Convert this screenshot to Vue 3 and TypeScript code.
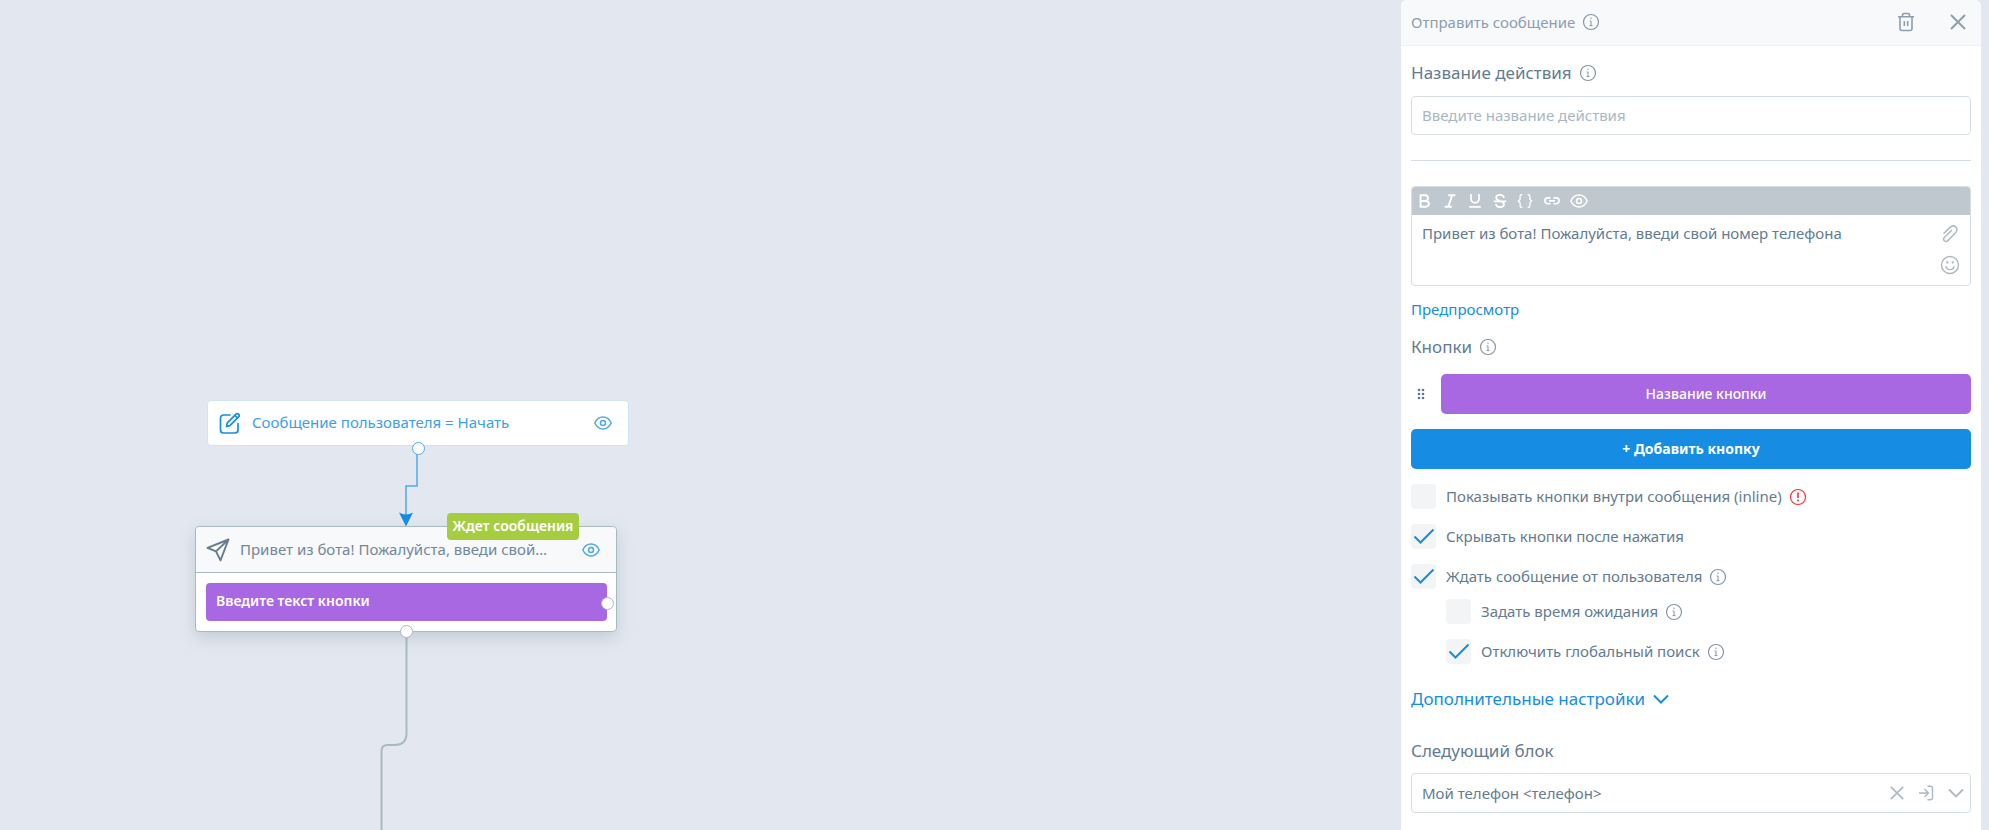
<script setup lang="ts">
import { defineComponent, h, ref } from 'vue'

const actionName = ref('')
const message = ref('Привет из бота! Пожалуйста, введи свой номер телефона')
const nextBlock = ref('phone')

interface Option {
  id: string
  label: string
  checked: boolean
  nested?: boolean
  tight?: boolean
  hint?: 'info' | 'warn'
}

const options = ref<Option[]>([
  { id: 'inline', label: 'Показывать кнопки внутри сообщения (inline)', checked: false, hint: 'warn' },
  { id: 'hide', label: 'Скрывать кнопки после нажатия', checked: true },
  { id: 'wait', label: 'Ждать сообщение от пользователя', checked: true, hint: 'info' },
  { id: 'timeout', label: 'Задать время ожидания', checked: false, nested: true, tight: true, hint: 'info' },
  { id: 'global', label: 'Отключить глобальный поиск', checked: true, nested: true, hint: 'info' },
])

const tools = [
  { id: 'bold', label: 'Жирный', d: 'M4 2.5h5.2a3.2 3.2 0 0 1 0 6.4H4zM4 8.9h6a3.3 3.3 0 0 1 0 6.6H4z', w: 2.2 },
  { id: 'italic', label: 'Курсив', d: 'M7 2.5h8M3 15.5h8M11.5 2.5l-4.500 13', w: 2.2 },
  { id: 'underline', label: 'Подчёркнутый', d: 'M4.5 1v5.500a4.500 4.500 0 0 0 9 0V1M2.500 15.500h13', w: 2 },
  { id: 'strike', label: 'Зачёркнутый', d: 'M13.5 5.5C13 3 11 2.2 9 2.2c-2.500 0-4.300 1.300-4.300 3.200 0 1.500 1 2.400 4.300 3.600 3 .8 4.500 2 4.500 3.600 0 2-2 3.200-4.500 3.200s-4.300-1.200-4.700-3.300M2 9.500h14', w: 2 },
  { id: 'vars', label: 'Переменная', d: 'M6 2H5a1.500 1.500 0 0 0-1.500 1.500v3.500L1.500 9l2 2v3.500A1.500 1.500 0 0 0 5 16h1M12 2h1a1.500 1.500 0 0 1 1.500 1.500v3.500l2 2-2 2v3.500a1.500 1.500 0 0 1-1.500 1.500h-1', w: 1.5 },
  { id: 'link', label: 'Ссылка', d: 'M7.500 5.500H4.300a3.300 3.300 0 0 0 0 6.600h3.200M10.500 5.500h3.200a3.300 3.300 0 0 1 0 6.600h-3.200M5.500 8.800h7', w: 1.9 },
]

const HintIcon = defineComponent({
  props: { warn: Boolean },
  setup(props) {
    return () =>
      h('svg', { class: 'hint', width: 18, height: 18, viewBox: '0 0 18 18', fill: 'none', stroke: props.warn ? '#f0323c' : '#8496a6', 'stroke-width': 1.2 }, [
        h('circle', { cx: 9, cy: 9, r: 7.5 }),
        props.warn
          ? h('path', { d: 'M9 4.500v5.500M9 11.600v1.800', 'stroke-width': 1.6 })
          : h('path', { d: 'M9 4.500v1.700M7.700 8H9v4.500M7.600 12.600h2.900', 'stroke-width': 1 }),
      ])
  },
})

const EyeIcon = defineComponent({
  setup() {
    return () =>
      h('svg', { class: 'eye', width: 18, height: 18, viewBox: '0 0 18 18', fill: 'none', stroke: 'currentColor', 'stroke-width': 1.5 }, [
        h('path', { d: 'M.8 9c1.800-3.700 4.900-5.900 8.200-5.900s6.400 2.200 8.200 5.900c-1.800 3.700-4.900 5.900-8.200 5.900S2.600 12.700.8 9z' }),
        h('circle', { cx: 9, cy: 9, r: 2.5 }),
      ])
  },
})
</script>

<template>
  <div class="app">
    <main class="canvas">
      <svg class="wires" fill="none">
        <path d="M417 452V486H406V518" stroke="#4fa9e6" stroke-width="1.5" />
        <path d="M399 512.500q7 4 14 0L406 526.500z" fill="#168de2" />
        <path d="M406.500 634V733q0 12-12 12h-7q-6 0-6 6V2000" stroke="#a9b9c0" stroke-width="2" />
      </svg>

      <article class="node start">
        <svg width="22" height="22" viewBox="0 0 22 22" fill="none" stroke="#168de2" stroke-width="1.7" stroke-linejoin="round" stroke-linecap="round">
          <path d="M11 3H4.500A3 3 0 0 0 1.500 6v12a3 3 0 0 0 3 3H16a3 3 0 0 0 3-3v-6.500" />
          <path d="M7.500 14.500l.8-3.600L17 2.200a1.800 1.800 0 0 1 2.600 2.600l-8.700 8.800zM16 3.500l2.500 2.500" />
        </svg>
        <span class="node-title">Сообщение пользователя = Начать</span>
        <EyeIcon />
        <i class="port blue"></i>
      </article>

      <article class="node message">
        <span class="badge">Ждет сообщения</span>
        <header class="node-head">
          <svg width="24" height="24" viewBox="0 0 24 24" fill="none" stroke="#647b90" stroke-width="1.900" stroke-linejoin="round">
            <path d="M22.500 1.500L1.500 9.800l8.500 3.600 4.500 9zM22.500 1.500L10 13.400" />
          </svg>
          <span class="node-title">Привет из бота! Пожалуйста, введи свой…</span>
          <EyeIcon />
        </header>
        <div class="node-body">
          <div class="node-button">Введите текст кнопки<i class="port side"></i></div>
        </div>
        <i class="port"></i>
      </article>
    </main>

    <aside class="panel">
      <header class="panel-head">
        <span>Отправить сообщение</span>
        <HintIcon />
        <button class="icon-btn trash" aria-label="Удалить">
          <svg width="18" height="20" viewBox="0 0 18 20" fill="none" stroke="currentColor" stroke-width="1.6">
            <path d="M1 4.700h16M5.500 4.500V3a1.500 1.500 0 0 1 1.500-1.500h4A1.500 1.500 0 0 1 12.500 3v1.500M3 5v11.500a2 2 0 0 0 2 2h8a2 2 0 0 0 2-2V5M7.300 9v5M10.700 9v5" />
          </svg>
        </button>
        <button class="icon-btn" aria-label="Закрыть">
          <svg width="16" height="16" viewBox="0 0 16 16" stroke="currentColor" stroke-width="1.900"><path d="M1 1l14 14M15 1L1 15" /></svg>
        </button>
      </header>

      <div class="panel-body">
        <div class="heading"><label for="action">Название действия</label><HintIcon /></div>
        <input id="action" v-model="actionName" class="field" type="text" placeholder="Введите название действия" />
        <hr />

        <section class="editor">
          <div class="toolbar">
            <button v-for="t in tools" :key="t.id" class="tool" :aria-label="t.label">
              <svg width="16" height="16" viewBox="0 0 18 18" fill="none" stroke="currentColor" :stroke-width="t.w"><path :d="t.d" /></svg>
            </button>
            <button class="tool" aria-label="Показать"><EyeIcon /></button>
          </div>
          <div class="editor-main">
            <textarea v-model="message" aria-label="Текст сообщения"></textarea>
            <div class="editor-side">
              <button class="icon-btn" aria-label="Вложение">
                <svg width="18" height="18" viewBox="0 0 18 18" fill="none" stroke="currentColor" stroke-width="1.500" stroke-linecap="round">
                  <path d="M3 8.200l5.800-5.600c2-1.900 4.500-2 6-.6 1.700 1.600 1.500 4-.2 5.700L7 15.500c-1.100 1.100-2.700 1.200-3.700.3-1-1-.9-2.500.2-3.600l7-6.700" />
                </svg>
              </button>
              <button class="icon-btn" aria-label="Эмодзи">
                <svg width="20" height="20" viewBox="0 0 20 20" fill="none" stroke="currentColor" stroke-width="1.400">
                  <circle cx="10" cy="10" r="8.500" /><path d="M5.800 11.200a4.300 4.300 0 0 0 8.400 0" />
                  <path d="M7.300 6.200v2.200M12.700 6.200v2.200" stroke-width="2" />
                </svg>
              </button>
            </div>
          </div>
        </section>

        <a class="preview" href="#preview">Предпросмотр</a>

        <div class="heading"><span>Кнопки</span><HintIcon /></div>
        <div class="button-row">
          <svg class="grip" width="8" height="12" viewBox="0 0 8 12" fill="#5f778c">
            <circle v-for="n in 6" :key="n" :cx="n % 2 ? 2 : 6" :cy="Math.ceil(n / 2) * 4 - 2" r="1.300" />
          </svg>
          <button class="btn purple">Название кнопки</button>
        </div>
        <button class="btn primary">+ Добавить кнопку</button>

        <div class="options">
          <div v-for="o in options" :key="o.id" class="option" :class="{ nested: o.nested, tight: o.tight }">
            <input :id="o.id" v-model="o.checked" type="checkbox" />
            <svg v-if="o.checked" class="tick" width="25" height="25" viewBox="0 0 25 25" fill="none" stroke="#168de2" stroke-width="2"><path d="M3.500 12.500l6 6L22.500 5.500" /></svg>
            <label :for="o.id">{{ o.label }}</label>
            <HintIcon v-if="o.hint" :warn="o.hint === 'warn'" />
          </div>
        </div>

        <button class="more">
          Дополнительные настройки
          <svg width="16" height="10" viewBox="0 0 16 10" fill="none" stroke="currentColor" stroke-width="2"><path d="M1 1.500l7 7 7-7" /></svg>
        </button>

        <div class="heading"><label for="next">Следующий блок</label></div>
        <div class="select">
          <select id="next" v-model="nextBlock">
            <option value="phone">Мой телефон &lt;телефон&gt;</option>
          </select>
          <button class="icon-btn" aria-label="Очистить">
            <svg width="14" height="14" viewBox="0 0 14 14" stroke="currentColor" stroke-width="1.700"><path d="M.8.8l12.400 12.400M13.200.8L.8 13.200" /></svg>
          </button>
          <button class="icon-btn" aria-label="Перейти к блоку">
            <svg width="16" height="16" viewBox="0 0 16 16" fill="none" stroke="currentColor" stroke-width="1.400"><path d="M1 8h9M6.500 4l4 4-4 4M9.500 1.200h3a2 2 0 0 1 2 2v9.600a2 2 0 0 1-2 2h-3" /></svg>
          </button>
          <svg class="caret" width="16" height="10" viewBox="0 0 16 10" fill="none" stroke="currentColor" stroke-width="1.800"><path d="M1 1.500l7 7 7-7" /></svg>
        </div>
      </div>
    </aside>
  </div>
</template>

<style>
body {
  margin: 0;
  background: #e3e8f0;
}
</style>

<style scoped>
.app {
  display: flex;
  min-height: 100vh;
  padding-right: 8px;
  box-sizing: border-box;
  overflow: hidden;
  background: #e3e8f0;
  color: #647b90;
  font-family: "Noto Sans", "Open Sans", sans-serif;
  font-size: 15px;
  line-height: 20px;
}
.app :deep(svg) {
  display: block;
  flex: none;
}
button,
input,
textarea,
select {
  font: inherit;
  color: inherit;
  box-sizing: border-box;
}
button {
  display: flex;
  align-items: center;
  justify-content: center;
  padding: 0;
  border: 0;
  background: none;
  cursor: pointer;
}

/* canvas */
.canvas {
  position: relative;
  flex: 1;
  min-width: 0;
  overflow: hidden;
}
.wires {
  position: absolute;
  left: 0;
  top: 0;
  width: 100%;
  height: 100%;
}
.node {
  position: absolute;
  box-sizing: border-box;
  width: 422px;
  border-radius: 4px;
  background: #fff;
}
.node-title {
  flex: 1;
  padding-bottom: 2px;
  white-space: nowrap;
}
.start {
  left: 207px;
  top: 400px;
  height: 46px;
  display: flex;
  align-items: center;
  gap: 11px;
  padding: 0 16px 0 11px;
  border: 1px solid #cfe5f6;
  color: #3d9fe3;
}
.node .eye {
  color: #4fa9e6;
}
.message {
  left: 195px;
  top: 526px;
  border: 1px solid #a9b9c0;
  box-shadow: 0 6px 16px rgba(120, 144, 160, 0.3);
}
.node-head {
  display: flex;
  align-items: center;
  gap: 10px;
  height: 45px;
  padding: 0 16px 0 10px;
  border-bottom: 1px solid #a9b9c0;
  border-radius: 4px 4px 0 0;
  background: #f7f9fb;
  color: #73879a;
}
.node-body {
  padding: 10px 9px 10px 10px;
}
.node-button {
  position: relative;
  height: 38px;
  padding-left: 10px;
  border-radius: 4px;
  background: #a868e1;
  color: #fff;
  font-size: 14px;
  font-weight: 600;
  line-height: 36px;
}
.badge {
  position: absolute;
  top: -14px;
  right: 37px;
  width: 132px;
  height: 27px;
  border-radius: 4px;
  background: #a5cd3f;
  color: #fff;
  font-size: 14px;
  font-weight: 600;
  line-height: 26px;
  text-align: center;
  white-space: nowrap;
}
.port {
  position: absolute;
  left: calc(50% - 6px);
  bottom: -7px;
  width: 11px;
  height: 11px;
  border: 1px solid #a9b9c0;
  border-radius: 50%;
  background: #fff;
}
.port.blue {
  bottom: -10px;
  border-color: #4fa9e6;
}
.port.side {
  left: auto;
  right: -7px;
  bottom: 11px;
}

/* panel */
.panel {
  width: 580px;
  flex: none;
  overflow: hidden;
  border-radius: 6px 6px 0 0;
  background: #fff;
}
.panel-head {
  display: flex;
  align-items: center;
  gap: 7px;
  height: 43px;
  padding: 0 15px 2px 10px;
  border-bottom: 1px solid #f0f2f5;
  background: #f7f9fb;
  color: #8c9dae;
}
.trash {
  margin: 0 28px 0 auto;
}
.panel-body {
  display: flex;
  flex-direction: column;
  padding: 15px 10px 10px;
}
.heading {
  display: flex;
  align-items: center;
  gap: 7px;
  font-size: 17px;
  line-height: 24px;
}
.field {
  height: 39px;
  margin: 11px 0 0;
  padding: 0 10px 2px;
  border: 1px solid #d6dee4;
  border-radius: 4px;
  background: #fff;
  outline: none;
}
.field::placeholder {
  color: #a9b7c4;
  opacity: 1;
}
hr {
  width: 100%;
  margin: 25px 0;
  border: 0;
  border-top: 1px solid #d6dee4;
}
.editor {
  height: 100px;
  box-sizing: border-box;
  overflow: hidden;
  border: 1px solid #d6dee4;
  border-radius: 4px;
}
.toolbar {
  display: flex;
  align-items: center;
  gap: 9px;
  height: 28px;
  padding-left: 5px;
  background: #bfc7cf;
  color: #fff;
}
.tool {
  width: 16px;
  height: 16px;
}
.tool:nth-child(6) {
  margin: 0 2px;
}
.editor-main {
  display: flex;
  height: 70px;
  padding: 8px 10px 0;
}
textarea {
  flex: 1;
  height: 56px;
  padding: 0;
  border: 0;
  background: none;
  outline: none;
  resize: none;
}
.editor-side {
  display: flex;
  flex-direction: column;
  align-items: center;
  gap: 12px;
  padding-top: 2px;
  color: #adb9c4;
}
.preview {
  align-self: flex-start;
  margin: 13px 0 16px;
  color: #168de2;
  text-decoration: none;
}
.button-row {
  display: flex;
  align-items: center;
  margin: 15px 0;
}
.grip {
  margin: 0 16px 0 6px;
}
.btn {
  height: 40px;
  border-radius: 5px;
  color: #fff;
  font-size: 14px;
}
.purple {
  flex: 1;
  background: #a868e1;
  font-weight: 500;
}
.primary {
  background: #168de2;
  font-weight: 700;
}
.options {
  padding-top: 15px;
}
.option {
  position: relative;
  display: flex;
  align-items: center;
  gap: 7px;
  height: 25px;
  margin-bottom: 15px;
}
.option label {
  margin-left: 3px;
  padding-bottom: 2px;
}
.option.nested {
  margin-left: 35px;
}
.option.tight {
  margin-top: -5px;
}
.option input {
  appearance: none;
  width: 25px;
  height: 25px;
  margin: 0;
  border-radius: 4px;
  background: #f2f4f6;
}
.tick {
  position: absolute;
  left: 0;
  top: 0;
  pointer-events: none;
}
.more {
  align-self: flex-start;
  gap: 8px;
  margin: 8px 0 28px;
  color: #168de2;
  font-size: 17px;
  line-height: 24px;
}
.select {
  display: flex;
  align-items: center;
  gap: 14px;
  height: 40px;
  box-sizing: border-box;
  margin-top: 10px;
  padding-right: 6px;
  border: 1px solid #d6dee4;
  border-radius: 4px;
  color: #adb9c4;
}
.select select {
  flex: 1;
  align-self: stretch;
  appearance: none;
  padding: 0 10px;
  border: 0;
  background: none;
  color: #647b90;
  outline: none;
}
.caret {
  pointer-events: none;
}
</style>
